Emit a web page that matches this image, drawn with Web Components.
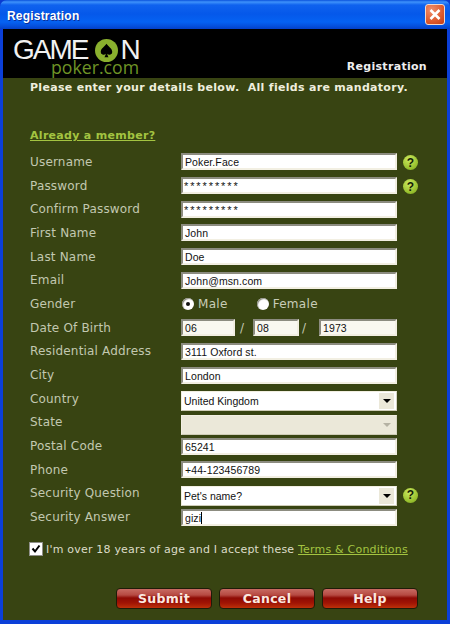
<!DOCTYPE html>
<html>
<head>
<meta charset="utf-8">
<title>Registration</title>
<style>
    html, body { margin: 0; padding: 0; background: #0a3bd0; }
</style>
</head>
<body>
<xp-window caption="Registration">
    <reg-header slot="top" section="Registration"></reg-header>
    <reg-form></reg-form>
</xp-window>

<script>
const FONT = `"DejaVu Sans", Verdana, sans-serif`;

class XpWindow extends HTMLElement {
    constructor() {
        super();
        this.attachShadow({ mode: "open" });
        this.shadowRoot.innerHTML = `
            <style>
                :host { display: flex; flex-direction: column; width: 450px; height: 624px; overflow: hidden;
                    background: #0b3fd8; border-radius: 7px 7px 0 0; }
                .bar { flex: none; height: 29px; display: flex; align-items: center; justify-content: space-between;
                    padding: 0 5px 0 7px; box-sizing: border-box;
                    background: linear-gradient(#0a52dc 0, #3e92fb 2px, #0f62ee 5px, #0558ea 14px, #0562f2 22px, #0550dc 26px, #0340c8 29px);
                    font: bold 12px "Liberation Sans", Arial, sans-serif; letter-spacing: .2px; color: #fff; text-shadow: 1px 1px 0 #0a2f9a; }
                #cap { padding-top: 3px; }
                .close { width: 20px; height: 21px; box-sizing: border-box; border: 1px solid #f3d8cc; border-radius: 3px;
                    background: radial-gradient(circle at 30% 25%, #f08e6c, #dd5a2e 60%, #c23c12); display: flex; }
                .close svg { width: 100%; height: 100%; }
                .body { flex: 1; display: flex; flex-direction: column; margin: 0 3px 4px 3px; min-height: 0; }
            </style>
            <div class="bar">
                <span id="cap"></span>
                <span class="close"><svg viewBox="0 0 18 19"><path d="M4.500 5 13.500 14M13.500 5 4.500 14" stroke="#fff" stroke-width="2.600" fill="none"/></svg></span>
            </div>
            <div class="body"><slot name="top"></slot><slot></slot></div>`;
    }
    connectedCallback() {
        this.shadowRoot.getElementById("cap").textContent = this.getAttribute("caption");
    }
}

class RegHeader extends HTMLElement {
    constructor() {
        super();
        this.attachShadow({ mode: "open" });
        this.shadowRoot.innerHTML = `
            <style>
                :host { display: flex; justify-content: space-between; align-items: flex-end; height: 49px; background: #000; padding: 0 20px 5px 10px; box-sizing: border-box; }
                .logo { display: flex; flex-direction: column; align-self: flex-start; padding-top: 10px; }
                .game { display: flex; align-items: center; font: 400 28px/22px "Liberation Sans", Arial, sans-serif; color: #f1f1f1; letter-spacing: -2px; height: 22px; }
                .game svg { flex: none; width: 23px; height: 23px; margin: 1px 2px 0 8px; }
                .poker { font: 400 17.700px/15px "Open Sans", sans-serif; color: #6f9426; margin: -1px 0 0 38px; }
                .section { font: bold 11px ${FONT}; color: #eee; letter-spacing: .3px; }
            </style>
            <div class="logo">
                <div class="game">GAME<svg viewBox="0 0 24 24"><circle cx="12" cy="12" r="12" fill="#8ab02e"/><path d="M12 5c2 3 6 5 6 8.500a3 3 0 0 1-5.200 2c.2 1.500.6 2.500 1.400 3.500h-4.400c.8-1 1.200-2 1.400-3.500a3 3 0 0 1-5.200-2c0-3.500 4-5.500 6-8.500z" fill="#000"/></svg>N</div>
                <div class="poker">poker.com</div>
            </div>
            <span class="section"></span>`;
    }
    connectedCallback() {
        this.shadowRoot.querySelector(".section").textContent = this.getAttribute("section");
    }
}

class HelpDot extends HTMLElement {
    constructor() {
        super();
        this.attachShadow({ mode: "open" });
        this.shadowRoot.innerHTML = `
            <style>
                :host { display: inline-flex; width: 15px; height: 15px; border-radius: 50%; align-items: center; justify-content: center;
                    margin-top: 2px;
                    background: radial-gradient(circle at 40% 30%, #cbe85e, #98c02e 65%, #749c20);
                    font: bold 12px "Liberation Sans", Arial, sans-serif; color: #141c08; }
            </style>?`;
    }
}

class RegInput extends HTMLElement {
    constructor() {
        super();
        this.attachShadow({ mode: "open" });
        this.shadowRoot.innerHTML = `
            <style>
                :host { display: block; flex: 1; min-width: 0; height: 17px; box-sizing: border-box; background: #fff;
                    border: 2px solid; border-color: #8c8c80 #f2efe2 #f2efe2 #8c8c80;
                    padding: 1px 0 0 2px; font: 10.500px/13px "Liberation Sans", Arial, sans-serif; letter-spacing: .1px; color: #111; overflow: hidden; white-space: nowrap; }
                .caret { display: inline-block; width: 1px; height: 12px; background: #000; vertical-align: -2px; }
                :host([tint]) { background: #f9f8f0; }
                :host([secret]) { font-size: 11px; letter-spacing: 1.900px; padding-left: 1px; }
            </style>
            <span id="v"></span>`;
    }
    connectedCallback() {
        const s = this.shadowRoot.getElementById("v");
        s.textContent = this.getAttribute("value");
        if (this.hasAttribute("caret")) {
            const c = document.createElement("span");
            c.className = "caret";
            s.after(c);
        }
    }
}

class RegSelect extends HTMLElement {
    constructor() {
        super();
        this.attachShadow({ mode: "open" });
        this.shadowRoot.innerHTML = `
            <style>
                :host { display: flex; flex: 1; height: 20px; margin: 1px 0 -4px; box-sizing: border-box; background: #fff;
                    border: 1px solid; border-color: #f2efe2 #d8d6c4 #cfcdb8 #f2efe2;
                    align-items: center; justify-content: space-between; padding: 0 2px 0 2px;
                    font: 10.500px "Liberation Sans", Arial, sans-serif; color: #111; }
                :host([disabled]) { background: #ebe8d9; }
                .arrow { width: 15px; height: 16px; background: #ebe8d9; display: flex; align-items: center; justify-content: center; }
                .arrow i { border: 4px solid transparent; border-top: 4px solid #000; border-bottom: 0; }
                :host([disabled]) .arrow i { border-top-color: #b5b2a3; }
            </style>
            <span id="v"></span><span class="arrow"><i></i></span>`;
    }
    connectedCallback() {
        this.shadowRoot.getElementById("v").textContent = this.getAttribute("value") || "";
    }
}

class RegRadio extends HTMLElement {
    constructor() {
        super();
        this.attachShadow({ mode: "open" });
        this.shadowRoot.innerHTML = `
            <style>
                :host { display: inline-flex; align-items: center; gap: 4px; font: 12px ${FONT}; color: #c8cdb8; letter-spacing: .3px; }
                .r { width: 12px; height: 12px; border-radius: 50%; background: #fff; box-shadow: inset 1px 1px 1px #8a8a80; display: flex; align-items: center; justify-content: center; }
                .r i { width: 4px; height: 4px; border-radius: 50%; background: #111; display: none; }
                :host([checked]) .r i { display: block; }
            </style>
            <span class="r"><i></i></span><slot></slot>`;
    }
}

class RedButton extends HTMLElement {
    constructor() {
        super();
        this.attachShadow({ mode: "open" });
        this.shadowRoot.innerHTML = `
            <style>
                :host { display: flex; width: 96px; height: 21px; box-sizing: border-box; align-items: center; justify-content: center;
                    border: 1px solid #1e1c08; border-radius: 4px;
                    background: linear-gradient(#c86a62 0, #b64a42 6px, #8e0a04 9px, #a01404 14px, #c83c0c 21px);
                    font: bold 12.500px ${FONT}; color: #fbe9e0; letter-spacing: .3px; }
            </style>
            <slot></slot>`;
    }
}

// one label + field line of the form
class RegRow extends HTMLElement {
    constructor() {
        super();
        this.attachShadow({ mode: "open" });
        this.shadowRoot.innerHTML = `
            <style>
                :host { display: grid; grid-template-columns: 151px 216px 21px; align-items: center; height: 23.700px; }
                .label { font: 12px ${FONT}; color: #c2c8b0; letter-spacing: .18px; white-space: nowrap; }
                .field { display: flex; align-items: center; }
                .help { display: flex; justify-content: flex-end; }
            </style>
            <span class="label" id="l"></span>
            <div class="field"><slot></slot></div>
            <div class="help"><slot name="help"></slot></div>`;
    }
    connectedCallback() {
        this.shadowRoot.getElementById("l").textContent = this.getAttribute("label");
    }
}

class RegForm extends HTMLElement {
    constructor() {
        super();
        this.attachShadow({ mode: "open" });
        this.shadowRoot.innerHTML = `
            <style>
                :host { display: flex; flex-direction: column; flex: 1; background: #384412; padding: 2px 0 0 27px; box-sizing: border-box; }
                .intro { font: bold 11px/15px ${FONT}; color: #eeeedd; letter-spacing: .3px; white-space: pre; }
                a { color: #a4c441; }
                .member { font: bold 11px/15px ${FONT}; letter-spacing: .3px; margin: 33px 0 7px; }
                .d1 { flex: none; width: 54px; } .d2 { flex: none; width: 46px; } .d3 { flex: none; width: 78px; }
                .sl { flex: none; box-sizing: border-box; color: #c2c8b0; font: 12px ${FONT}; }
                .s1 { width: 18px; padding-left: 5px; }
                .s2 { width: 20px; padding-left: 3px; }
                .gender { display: flex; gap: 29px; margin-left: 1px; }
                .accept { display: flex; align-items: center; gap: 3px; margin: 12px 0 0 -1px; font: 11px ${FONT}; color: #dcdcc8; letter-spacing: .2px; height: 16px; white-space: nowrap; }
                .box { width: 12px; height: 12px; background: #fff; border: 1px solid #90908a; display: flex; flex: none; }
                .buttons { display: flex; gap: 7px; margin: 31px 0 0 86px; }
                help-dot.low { margin-top: 4px; }
            </style>
            <div class="intro">Please enter your details below.  All fields are mandatory.</div>
            <div class="member"><a href="#">Already a member?</a></div>
            <reg-row label="Username"><reg-input value="Poker.Face"></reg-input><help-dot slot="help"></help-dot></reg-row>
            <reg-row label="Password"><reg-input secret value="*********"></reg-input><help-dot slot="help"></help-dot></reg-row>
            <reg-row label="Confirm Password"><reg-input secret value="*********"></reg-input></reg-row>
            <reg-row label="First Name"><reg-input value="John"></reg-input></reg-row>
            <reg-row label="Last Name"><reg-input value="Doe"></reg-input></reg-row>
            <reg-row label="Email"><reg-input value="John@msn.com"></reg-input></reg-row>
            <reg-row label="Gender"><div class="gender"><reg-radio checked>Male</reg-radio><reg-radio>Female</reg-radio></div></reg-row>
            <reg-row label="Date Of Birth">
                <reg-input class="d1" tint value="06"></reg-input><span class="sl s1">/</span>
                <reg-input class="d2" tint value="08"></reg-input><span class="sl s2">/</span>
                <reg-input class="d3" tint value="1973"></reg-input>
            </reg-row>
            <reg-row label="Residential Address"><reg-input value="3111 Oxford st."></reg-input></reg-row>
            <reg-row label="City"><reg-input value="London"></reg-input></reg-row>
            <reg-row label="Country"><reg-select value="United Kingdom"></reg-select></reg-row>
            <reg-row label="State"><reg-select disabled></reg-select></reg-row>
            <reg-row label="Postal Code"><reg-input value="65241"></reg-input></reg-row>
            <reg-row label="Phone"><reg-input value="+44-123456789"></reg-input></reg-row>
            <reg-row label="Security Question"><reg-select value="Pet's name?"></reg-select><help-dot class="low" slot="help"></help-dot></reg-row>
            <reg-row label="Security Answer"><reg-input value="gizi" caret></reg-input></reg-row>
            <div class="accept">
                <span class="box"><svg viewBox="0 0 12 12"><path d="M2.500 5.500 5 8.500 9.500 2.500" stroke="#000" stroke-width="2" fill="none"/></svg></span>
                <span>I'm over 18 years of age and I accept these <a href="#">Terms &amp; Conditions</a></span>
            </div>
            <div class="buttons"><red-button>Submit</red-button><red-button>Cancel</red-button><red-button>Help</red-button></div>`;
    }
}

customElements.define("xp-window", XpWindow);
customElements.define("reg-header", RegHeader);
customElements.define("help-dot", HelpDot);
customElements.define("reg-input", RegInput);
customElements.define("reg-select", RegSelect);
customElements.define("reg-radio", RegRadio);
customElements.define("red-button", RedButton);
customElements.define("reg-row", RegRow);
customElements.define("reg-form", RegForm);
</script>
</body>
</html>
